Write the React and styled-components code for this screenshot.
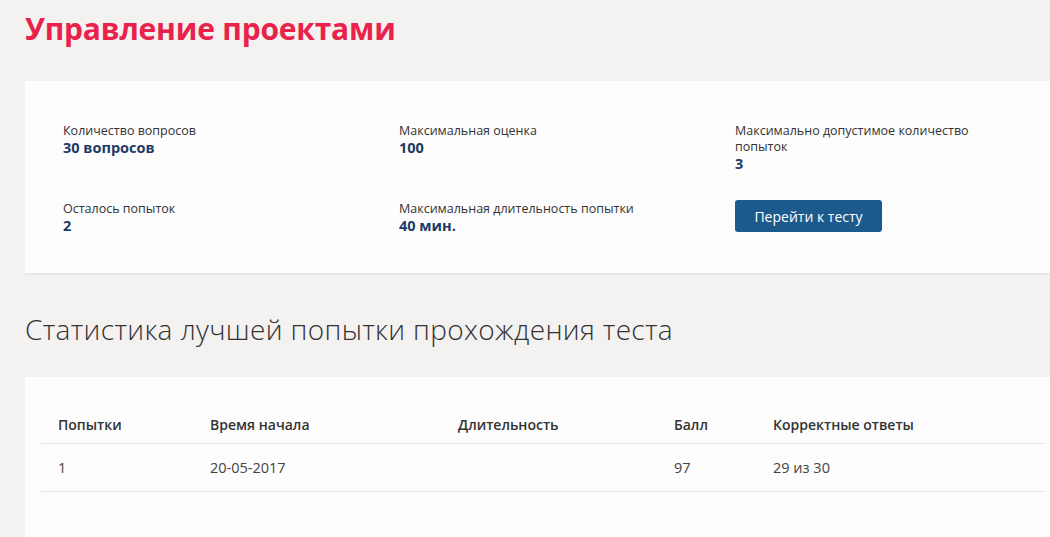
import React from "react";
import styled, { createGlobalStyle } from "styled-components";

const Global = createGlobalStyle`
  html, body { margin: 0; padding: 0; }
  body {
    background: #f4f1f1;
    font-family: "Open Sans", "Liberation Sans", sans-serif;
    color: #333;
    overflow: hidden;
  }
`;

const Page = styled.div`
  width: 1090px;
  padding: 0 0 0 25px;
  box-sizing: border-box;
`;

const Title = styled.h1`
  margin: 0;
  padding-top: 9px;
  height: 81px;
  box-sizing: border-box;
  font-size: 30px;
  font-weight: 700;
  color: #e8224a;
  letter-spacing: -0.2px;
  line-height: 40px;
`;

const Card = styled.section`
  background: #fdfdfd;
  border-bottom: 1px solid #e6e4e4;
  box-shadow: 0 1px 1px rgba(0,0,0,0.03);
`;

const InfoCard = styled(Card)`
  height: 193px;
  box-sizing: border-box;
  padding: 42px 0 0 38px;
`;

const InfoGrid = styled.div`
  display: grid;
  grid-template-columns: 336px 336px 300px;
  grid-auto-rows: auto;
  row-gap: 28px;
`;

const Item = styled.div`
  display: flex;
  flex-direction: column;
  min-height: 40px;
`;

const Label = styled.div`
  font-size: 12.5px;
  line-height: 16px;
  color: #333;
  max-width: 260px;
`;

const Value = styled.div`
  font-size: 14.5px;
  line-height: 18px;
  font-weight: 700;
  color: #1d3a66;
`;

const Button = styled.button`
  align-self: flex-start;
  margin-top: -1px;
  width: 147px;
  height: 32px;
  border: none;
  border-radius: 3px;
  background: #1c5a8e;
  color: #fff;
  font-family: "Open Sans", "Liberation Sans", sans-serif;
  font-size: 14px;
  cursor: pointer;
`;

const SubTitle = styled.h2`
  margin: 0;
  height: 103px;
  padding-top: 38px;
  box-sizing: border-box;
  font-size: 28px;
  font-weight: 300;
  letter-spacing: 0.35px;
  line-height: 34px;
  color: #333;
`;

const TableCard = styled(Card)`
  height: 200px;
  padding: 32px 0 0 16px;
  box-sizing: border-box;
`;

const Table = styled.table`
  width: 1004px;
  table-layout: fixed;
  border-collapse: collapse;
  font-size: 14px;
`;

const Th = styled.th`
  text-align: left;
  font-weight: 600;
  color: #333;
  padding: 0 0 3px 17px;
  height: 34px;
  box-sizing: border-box;
  border-bottom: 1px solid #e3e3e3;
  width: ${(p) => p.$w || "auto"};
`;

const Td = styled.td`
  padding: 0 0 0 17px;
  height: 47px;
  font-size: 14.5px;
  color: #444;
  border-bottom: 1px solid #e3e3e3;
`;

const info = [
  { label: "Количество вопросов", value: "30 вопросов" },
  { label: "Максимальная оценка", value: "100" },
  { label: "Максимально допустимое количество попыток", value: "3" },
  { label: "Осталось попыток", value: "2" },
  { label: "Максимальная длительность попытки", value: "40 мин." },
];

const cols = [
  { t: "Попытки", w: "152px" },
  { t: "Время начала", w: "248px" },
  { t: "Длительность", w: "216px" },
  { t: "Балл", w: "99px" },
  { t: "Корректные ответы" },
];

const row = ["1", "20-05-2017", "", "97", "29 из 30"];

export default function App() {
  return (
    <Page>
      <Global />
      <Title>Управление проектами</Title>
      <InfoCard>
        <InfoGrid>
          {info.map((it) => (
            <Item key={it.label}>
              <Label>{it.label}</Label>
              <Value>{it.value}</Value>
            </Item>
          ))}
          <Item>
            <Button>Перейти к тесту</Button>
          </Item>
        </InfoGrid>
      </InfoCard>
      <SubTitle>Статистика лучшей попытки прохождения теста</SubTitle>
      <TableCard>
        <Table>
          <thead>
            <tr>
              {cols.map((c) => (
                <Th key={c.t} $w={c.w}>{c.t}</Th>
              ))}
            </tr>
          </thead>
          <tbody>
            <tr>
              {row.map((v, i) => (
                <Td key={i}>{v}</Td>
              ))}
            </tr>
          </tbody>
        </Table>
      </TableCard>
    </Page>
  );
}
